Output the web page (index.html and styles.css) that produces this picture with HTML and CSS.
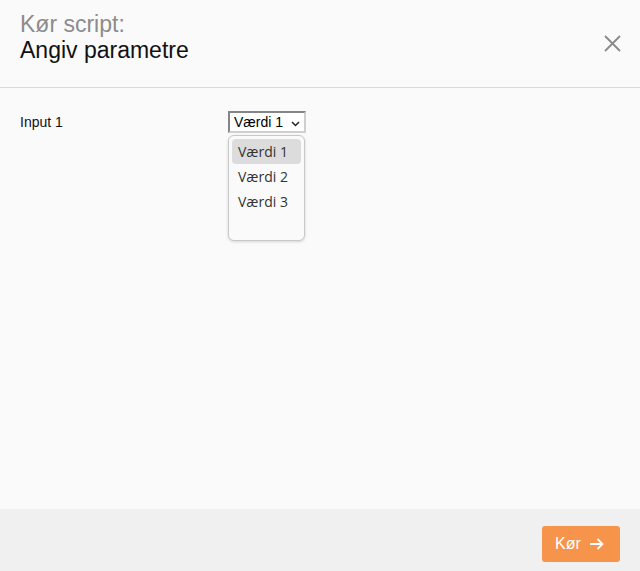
FILE: index.html
```html
<!DOCTYPE html>
<html lang="da">
<head>
  <meta charset="UTF-8">
  <meta name="viewport" content="width=device-width, initial-scale=1.0">
  <title>Kør script</title>
  <link rel="stylesheet" href="styles.css">
</head>
<body>
  <div class="dialog">

    <div class="header">
      <div class="titles">
        <div class="pretitle">Kør script:</div>
        <h1>Angiv parametre</h1>
      </div>
      <button class="close-btn" aria-label="Luk">
        <svg width="17" height="17" viewBox="0 0 17 17">
          <path d="M1 1 L16 16 M16 1 L1 16" stroke="#8a8a8a" stroke-width="1.8" fill="none"/>
        </svg>
      </button>
    </div>

    <div class="content">
      <div class="form-row">
        <label for="input1">Input 1</label>
        <div class="select-wrapper">
          <select id="input1">
            <option>Værdi 1</option>
            <option>Værdi 2</option>
            <option>Værdi 3</option>
          </select>
          <svg class="chevron" width="9" height="6" viewBox="0 0 9 6">
            <path d="M1 1 L4.5 4.5 L8 1" stroke="#222" stroke-width="1.5" fill="none"/>
          </svg>
          <ul class="options">
            <li class="active">Værdi 1</li>
            <li>Værdi 2</li>
            <li>Værdi 3</li>
          </ul>
        </div>
      </div>
    </div>

    <div class="footer">
      <button class="run-btn">
        <span>Kør</span>
        <svg width="15" height="12" viewBox="0 0 15 12">
          <path d="M1 6 H13.5 M8.5 1 L13.5 6 L8.5 11" stroke="#fff" stroke-width="1.8" fill="none"/>
        </svg>
      </button>
    </div>

  </div>
</body>
</html>
```

FILE: styles.css
```css
* {
  margin: 0;
  padding: 0;
  box-sizing: border-box;
}

html, body {
  height: 100%;
}

body {
  font-family: "Liberation Sans", Arial, sans-serif;
  background: #fafafa;
  color: #111;
  overflow: hidden;
}

.dialog {
  height: 100vh;
  display: flex;
  flex-direction: column;
}

.header {
  display: flex;
  justify-content: space-between;
  align-items: flex-start;
  height: 88px;
  padding: 11px 19px 0 20px;
  border-bottom: 1px solid #d9d9d9;
}

.pretitle {
  font-size: 23px;
  line-height: 26px;
  color: #8c8c8c;
}

h1 {
  font-size: 23px;
  line-height: 26px;
  font-weight: 400;
  color: #111;
}

.close-btn {
  background: none;
  border: none;
  margin-top: 24px;
  cursor: pointer;
  display: flex;
}

.content {
  flex: 1;
  padding: 23px 20px;
}

.form-row {
  display: flex;
  align-items: flex-start;
}

.form-row label {
  width: 208px;
  font-size: 14px;
  line-height: 22px;
  color: #111;
}

.select-wrapper {
  position: relative;
  width: 78px;
}

select {
  appearance: none;
  -webkit-appearance: none;
  width: 78px;
  height: 22px;
  padding: 0 0 0 4px;
  font-family: "Liberation Sans", Arial, sans-serif;
  font-size: 14px;
  color: #000;
  background: #fff;
  border: 2px solid;
  border-color: #858585 #cfcfcf #cfcfcf #858585;
  border-radius: 0;
  outline: none;
}

.chevron {
  position: absolute;
  left: 63px;
  top: 10px;
  pointer-events: none;
}

.options {
  position: absolute;
  left: 0;
  top: 24px;
  width: 77px;
  height: 106px;
  list-style: none;
  padding: 3px;
  background: #fafafa;
  border: 1px solid #c8c8c8;
  border-radius: 6px;
  box-shadow: 0 1px 3px rgba(0, 0, 0, 0.15);
  font-family: "Open Sans", "Noto Sans", sans-serif;
  font-size: 14px;
  color: #333;
}

.options li {
  height: 25px;
  line-height: 25px;
  padding-left: 6px;
  border-radius: 4px;
}

.options li.active {
  background: #dcdcdc;
}

.footer {
  height: 62px;
  flex-shrink: 0;
  background: #f0f0f0;
  display: flex;
  justify-content: flex-end;
  padding: 17px 20px 0;
}

.run-btn {
  width: 78px;
  height: 36px;
  display: flex;
  align-items: center;
  gap: 8px;
  padding-left: 13px;
  background: #f7944b;
  color: #fff;
  border: none;
  border-radius: 3px;
  font-family: "Liberation Sans", Arial, sans-serif;
  font-size: 16px;
  cursor: pointer;
}
```
